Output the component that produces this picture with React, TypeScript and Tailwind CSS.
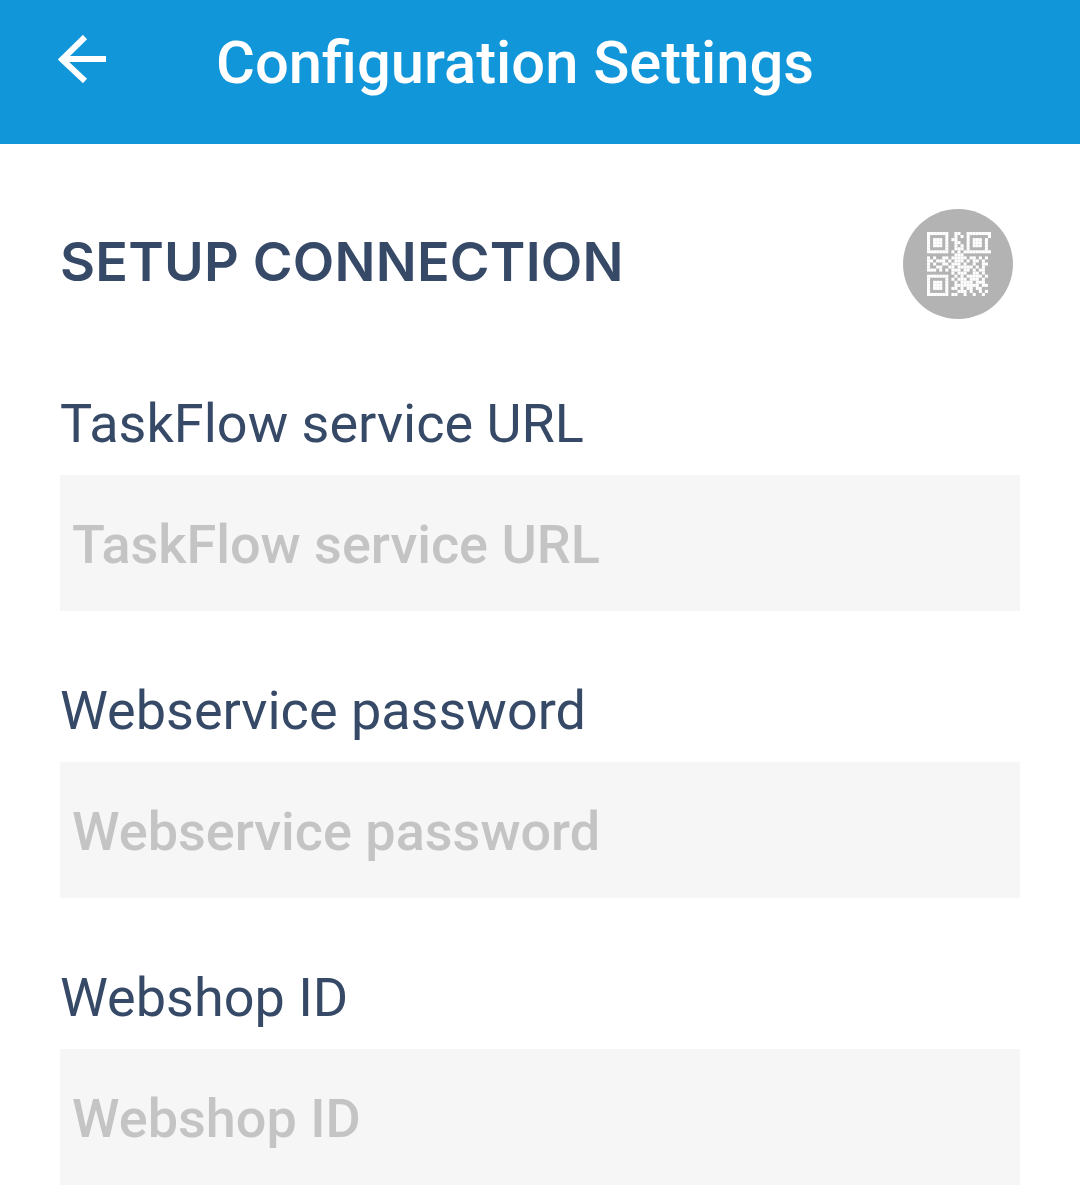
const fields = ["TaskFlow service URL", "Webservice password", "Webshop ID"];

// QR modules, each string is a row of the 21x21 code
const qrRows = [
  "111111100110011111111",
  "100000100101010000001",
  "101110101100010111010",
  "101110100110010111010",
  "101110100101010111010",
  "100000100111010000010",
  "111111101010111111111",
  "000000000111000000000",
  "101001101111101101010",
  "110111010111010110100",
  "101001101110100100110",
  "100110011011111010100",
  "111010101110110101100",
  "000000001011100110100",
  "111111100101011111010",
  "100000101011101110100",
  "101110100101111011100",
  "101110100111111110110",
  "101110101101011011000",
  "100000100011101001010",
  "111111101100100100100",
];

function QrIcon() {
  return (
    <svg width="64" height="64" viewBox="0 0 21 21" fill="#ffffff" className="ml-[1px]">
      {qrRows.map((row, y) =>
        row.split("").map((cell, x) =>
          cell === "1" ? <rect key={`${x}-${y}`} x={x} y={y} width="1" height="1" /> : null
        )
      )}
    </svg>
  );
}

export default function App() {
  return (
    <div className="h-[1192px] w-[1080px] overflow-hidden bg-white font-['Roboto',sans-serif]">
      {/* Header */}
      <header className="flex h-[144px] items-center bg-[#1296da] pl-[58px]">
        <svg width="50" height="48" viewBox="0 0 50 48" fill="none" stroke="#ffffff" strokeWidth="6" className="mb-[26px]">
          <path d="M48 24H5" />
          <path d="M27 2L4 24.500L27 46" />
        </svg>
        <h1 className="ml-[108px] mb-[16px] text-[59.700px] font-medium leading-none text-white">
          Configuration Settings
        </h1>
      </header>

      <main className="px-[60px]">
        {/* Section title */}
        <div className="mt-[65px] flex h-[110px] items-center justify-between pr-[7px]">
          <h2 className="mb-[5px] font-['Inter',sans-serif] text-[54px] font-semibold leading-none tracking-[0.200px] text-[#364a68]">
            SETUP CONNECTION
          </h2>
          <button className="flex h-[110px] w-[110px] items-center justify-center rounded-full bg-[#b3b3b3]">
            <QrIcon />
          </button>
        </div>

        {/* Fields */}
        <div className="mt-[69px] flex flex-col gap-[64px]">
          {fields.map((field) => (
            <div key={field}>
              <label className="block h-[87px] text-[54px] leading-[72px] text-[#364a68]">{field}</label>
              <input
                placeholder={field}
                className="block h-[136px] w-full bg-[#f6f6f6] px-[12px] pt-[2px] text-[54px] font-medium outline-none placeholder:text-[#c4c4c4]"
              />
            </div>
          ))}
        </div>
      </main>
    </div>
  );
}
